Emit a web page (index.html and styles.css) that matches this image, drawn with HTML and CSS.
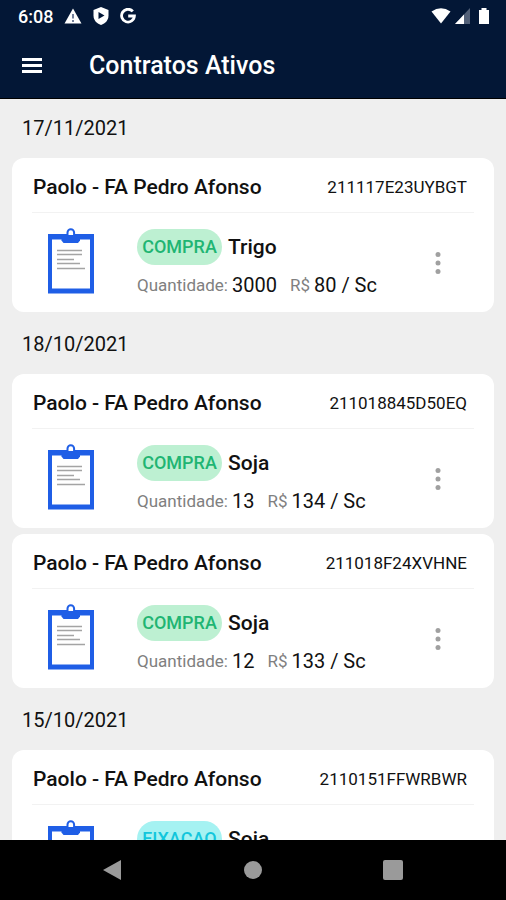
FILE: index.html
```html
<!DOCTYPE html>
<html lang="pt-BR">
<head>
<meta charset="utf-8">
<meta name="viewport" content="width=device-width, initial-scale=1">
<title>Contratos Ativos</title>
<link rel="stylesheet" href="styles.css">
</head>
<body>
<svg class="sprite" aria-hidden="true">
  <symbol id="clipboard" viewBox="0 0 46 66">
    <path d="M0 6H46V65.500H0Z" fill="#1f5ee6"/>
    <path d="M4 11.500H42V60.500H4Z" fill="#fff"/>
    <path d="M19.500 8V4.500a3.300 3.300 0 0 1 6.600 0V8" fill="#fff" stroke="#1f5ee6" stroke-width="2"/>
    <path d="M13.500 7H32V12.500L30 15H15.500L13.500 12.500Z" fill="#1f5ee6"/>
    <path d="M9 22.500H34M9 26.500H34M9 31.500H26M9 35.500H32M9 40.500H37" stroke="#a4a4a4" stroke-width="1.500"/>
  </symbol>
  <symbol id="more" viewBox="0 0 6 24">
    <g fill="#a0a0a0"><circle cx="3" cy="3.500" r="2.500"/><circle cx="3" cy="12" r="2.500"/><circle cx="3" cy="20.500" r="2.500"/></g>
  </symbol>
</svg>
<div class="app">
  <header class="top">
    <div class="status">
      <span class="clock">6:08</span>
      <svg width="18" height="16" viewBox="0 0 18 16"><path d="M9 0.500L17.500 15.500H0.500Z" fill="#fff"/><path d="M9 6V10.500M9 12V14" stroke="#74809a" stroke-width="2"/></svg>
      <svg width="16" height="18" viewBox="0 0 16 18"><path d="M8 0L15.500 3V8.500C15.500 13 12.500 16.500 8 18C3.500 16.500 0.500 13 0.500 8.500V3Z" fill="#fff"/><path d="M5.500 5L11.500 8.500L5.500 12Z" fill="#031736"/></svg>
      <svg width="16" height="16" viewBox="0 0 16 16"><path d="M12.800 3.400A6.400 6.400 0 1 0 14.400 8H8.200" fill="none" stroke="#fff" stroke-width="2.800"/></svg>
      <span class="signals">
        <svg width="20" height="16" viewBox="0 0 20 16"><path d="M0.500 3.500Q10 -3 19.500 3.500L10 15.500Z" fill="#fff"/></svg>
        <svg width="15" height="16" viewBox="0 0 15 16"><path d="M15 0V16H0Z" fill="#526078"/><path d="M9 6.400V16H0Z" fill="#fff"/></svg>
        <svg width="12" height="18" viewBox="0 0 12 18"><path d="M3.500 1H8.500V3H11V17H1V3H3.500Z" fill="#fff"/></svg>
      </span>
    </div>
    <div class="bar">
      <button class="menu" aria-label="Menu"><svg width="20" height="17" viewBox="0 0 20 17"><path d="M0 2.500H20M0 8.500H20M0 14.500H20" stroke="#fff" stroke-width="3"/></svg></button>
      <h1>Contratos Ativos</h1>
    </div>
  </header>
  <main class="list">
    <section>
      <h2>17/11/2021</h2>
      <article class="card">
        <div class="head"><h3>Paolo - FA Pedro Afonso</h3><span class="code">211117E23UYBGT</span></div>
        <div class="body">
          <svg class="clip"><use href="#clipboard"/></svg>
          <div class="info">
            <div class="line"><span class="badge buy">COMPRA</span><strong>Trigo</strong></div>
            <div class="line"><span class="label">Quantidade:</span><span class="value">3000</span><span class="label price">R$</span><span class="value">80 / Sc</span></div>
          </div>
          <button class="more" aria-label="Mais opções"><svg><use href="#more"/></svg></button>
        </div>
      </article>
    </section>
    <section>
      <h2>18/10/2021</h2>
      <article class="card">
        <div class="head"><h3>Paolo - FA Pedro Afonso</h3><span class="code">211018845D50EQ</span></div>
        <div class="body">
          <svg class="clip"><use href="#clipboard"/></svg>
          <div class="info">
            <div class="line"><span class="badge buy">COMPRA</span><strong>Soja</strong></div>
            <div class="line"><span class="label">Quantidade:</span><span class="value">13</span><span class="label price">R$</span><span class="value">134 / Sc</span></div>
          </div>
          <button class="more" aria-label="Mais opções"><svg><use href="#more"/></svg></button>
        </div>
      </article>
      <article class="card">
        <div class="head"><h3>Paolo - FA Pedro Afonso</h3><span class="code">211018F24XVHNE</span></div>
        <div class="body">
          <svg class="clip"><use href="#clipboard"/></svg>
          <div class="info">
            <div class="line"><span class="badge buy">COMPRA</span><strong>Soja</strong></div>
            <div class="line"><span class="label">Quantidade:</span><span class="value">12</span><span class="label price">R$</span><span class="value">133 / Sc</span></div>
          </div>
          <button class="more" aria-label="Mais opções"><svg><use href="#more"/></svg></button>
        </div>
      </article>
    </section>
    <section>
      <h2>15/10/2021</h2>
      <article class="card">
        <div class="head"><h3>Paolo - FA Pedro Afonso</h3><span class="code">2110151FFWRBWR</span></div>
        <div class="body">
          <svg class="clip"><use href="#clipboard"/></svg>
          <div class="info">
            <div class="line"><span class="badge fix">FIXACAO</span><strong>Soja</strong></div>
          </div>
        </div>
      </article>
    </section>
  </main>
  <nav class="nav">
    <button aria-label="Voltar"><svg width="20" height="20" viewBox="0 0 20 20"><path d="M0 10L18 0V20Z"/></svg></button>
    <button aria-label="Início"><svg width="20" height="20" viewBox="0 0 20 20"><circle cx="10" cy="10" r="9"/></svg></button>
    <button aria-label="Recentes"><svg width="20" height="20" viewBox="0 0 20 20"><rect width="20" height="20" rx="2"/></svg></button>
  </nav>
</div>
</body>
</html>
```
FILE: styles.css
```css
* { box-sizing: border-box; }
body { margin: 0; font-family: Roboto, "Liberation Sans", sans-serif; color: #111; background: #efefef; }
h1, h2, h3 { margin: 0; font-weight: 500; }
button { border: 0; padding: 0; background: none; display: flex; align-items: center; justify-content: center; }
svg { display: block; flex: none; }
.sprite { position: absolute; width: 0; height: 0; }
.app { height: 100vh; display: flex; flex-direction: column; }

.top { background: #031736; color: #fff; border-bottom: 1px solid #000; flex: none; }
.status { height: 32px; padding: 0 16px 0 18px; display: flex; align-items: center; gap: 11px; }
.clock { font-size: 18px; font-weight: 500; }
.signals { margin-left: auto; display: flex; align-items: center; gap: 4px; }
.signals svg:last-child { margin-left: 4px; }
.bar { height: 66px; padding: 0 22px; display: flex; align-items: center; gap: 47px; }
h1 { font-size: 25px; line-height: 30px; padding-top: 1px; }

.list { flex: 1; min-height: 0; overflow: hidden; padding: 0 12px; }
section { margin-bottom: 2px; }
h2 { height: 59px; padding-left: 10px; font-size: 20px; line-height: 59px; font-weight: 400; }
section + section h2 { height: 60px; line-height: 60px; }
.card { height: 154px; margin-bottom: 6px; background: #fff; border-radius: 12px; padding: 0 20px; }
.card:last-child { margin-bottom: 0; }
.head { height: 55px; padding: 4px 7px 0 1px; display: flex; align-items: center; justify-content: space-between; border-bottom: 1px solid #f2f2f2; }
h3 { font-size: 21px; line-height: 24px; }
.code { font-size: 17px; }
.body { height: 99px; padding: 0 33px 0 16px; display: flex; align-items: center; }
.clip { width: 46px; height: 66px; margin-bottom: 4px; }
.info { flex: 1; margin-left: 43px; height: 68px; display: flex; flex-direction: column; gap: 8px; }
.line { display: flex; align-items: center; line-height: 24px; white-space: nowrap; }
.badge { width: 85px; height: 36px; border-radius: 18px; text-align: center; font-size: 18px; line-height: 36px; font-weight: 500; margin-right: 6px; }
.buy { background: #bdf0d2; color: #1fb573; }
.fix { background: #a5f2f2; color: #12c6dc; }
strong { font-size: 21px; font-weight: 500; }
.label { font-size: 17px; color: #808080; margin-right: 4px; }
.price { margin-left: 13px; }
.value { font-size: 20px; }
.more svg { width: 6px; height: 24px; }

.nav { flex: none; height: 60px; padding: 0 43px; background: #000; display: flex; align-items: center; }
.nav button { flex: 1; height: 60px; }
.nav svg { fill: #9a9a9a; }
```
